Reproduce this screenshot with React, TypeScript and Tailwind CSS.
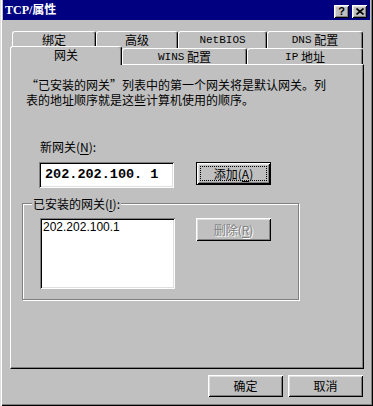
import React from "react";

const raised =
  "bg-[#c0c0c0] shadow-[inset_1px_1px_#ffffff,inset_-1px_-1px_#000000,inset_2px_2px_#dfdfdf,inset_-2px_-2px_#808080]";
const sunken =
  "shadow-[inset_1px_1px_#808080,inset_-1px_-1px_#ffffff,inset_2px_2px_#000000,inset_-2px_-2px_#dfdfdf]";

function U({ children }: { children: React.ReactNode }) {
  return <span className="underline underline-offset-[2px] decoration-1">{children}</span>;
}

function Latin({ children }: { children: React.ReactNode }) {
  return <span className="font-['Liberation_Mono',monospace] text-[11px]">{children}</span>;
}

function Tab({ className, children }: { className: string; children: React.ReactNode }) {
  return (
    <div
      className={`flex items-center justify-center border-l border-t border-r border-l-white border-t-white border-r-black rounded-t-[3px] shadow-[inset_-1px_0_#808080] bg-[#c0c0c0] ${className}`}
    >
      {children}
    </div>
  );
}

function Button({ className = "", children }: { className?: string; children: React.ReactNode }) {
  return (
    <div className={`w-[75px] flex items-center justify-center ${raised} ${className}`}>{children}</div>
  );
}

export default function App() {
  return (
    <div className="w-[373px] h-[406px] bg-[#c0c0c0] px-[3px] flex flex-col text-black font-['Noto_Sans_CJK_SC',sans-serif] text-[12px] leading-[14px] shadow-[inset_1px_0_#dfdfdf,inset_2px_0_#ffffff,inset_-1px_-1px_#000000,inset_-2px_-2px_#808080]">
      {/* Title bar */}
      <div className="h-[20px] bg-[#000080] flex items-center pl-[2px] pr-[3px]">
        <span className="text-white font-bold text-[12px] leading-[14px] font-['Liberation_Serif','Noto_Sans_CJK_SC',serif]">
          TCP/属性
        </span>
        <div className="ml-auto flex gap-[3px] mt-[3px]">
          <div className={`w-[15px] h-[13px] flex items-center justify-center ${raised}`}>
            <span className="font-['Liberation_Sans',sans-serif] font-bold text-[11px] leading-[11px]">?</span>
          </div>
          <div className={`w-[15px] h-[13px] flex items-center justify-center ${raised}`}>
            <svg width="8" height="7" viewBox="0 0 8 7">
              <path d="M0.5 0.5 L7.5 6.5 M7.5 0.5 L0.5 6.5" stroke="black" strokeWidth="1.6" />
            </svg>
          </div>
        </div>
      </div>

      {/* Tabs + panel */}
      <div className="ml-[7px] w-[354px] mt-[11px] flex flex-col">
        <div className="flex h-[17px] pl-[2px]">
          <Tab className="w-[84px] h-[17px]">绑定</Tab>
          <Tab className="w-[82px] h-[17px]">高级</Tab>
          <Tab className="w-[89px] h-[17px]">
            <Latin>NetBIOS</Latin>
          </Tab>
          <Tab className="w-[96px] h-[17px]">
            <Latin>DNS</Latin>&nbsp;配置
          </Tab>
        </div>
        <div className="flex h-[16px] items-start">
          <Tab className="w-[112px] h-[19px] -mt-[2px] relative z-10 pb-[3px]">网关</Tab>
          <Tab className="w-[125px] h-[16px]">
            <Latin>WINS</Latin>&nbsp;配置
          </Tab>
          <Tab className="w-[116px] h-[16px]">
            <Latin>IP</Latin>&nbsp;地址
          </Tab>
        </div>

        {/* Panel */}
        <div className="h-[305px] border-l border-t border-l-white border-t-white border-r border-b border-r-black border-b-black shadow-[inset_-1px_-1px_#808080] pl-[15px] pt-[12px] flex flex-col">
          <p className="whitespace-nowrap leading-[15px]">
            “已安装的网关”列表中的第一个网关将是默认网关。列
            <br />
            表的地址顺序就是这些计算机使用的顺序。
          </p>

          <div className="mt-[33px] ml-[14px]">
            新网关(<U>N</U>):
          </div>

          <div className="mt-[8px] ml-[13px] flex items-start gap-[22px]">
            <div className={`w-[135px] h-[26px] bg-white ${sunken} flex items-center pl-[6px]`}>
              <span className="font-['Liberation_Mono',monospace] font-bold text-[13.5px] leading-[16px]">
                202.202.100. 1
              </span>
            </div>
            <div className="w-[75px] h-[23px] border border-black">
              <div className={`w-full h-full p-[3px] flex ${raised}`}>
                <div className="flex-1 border border-dotted border-black flex items-center justify-center">
                  添加(<U>A</U>)
                </div>
              </div>
            </div>
          </div>

          {/* Group box */}
          <div className="relative mt-[15px] -ml-[4px] w-[277px] h-[97px] border border-[#808080] shadow-[inset_1px_1px_#ffffff,1px_1px_0_#ffffff] flex items-start pt-[14px] pl-[17px] gap-[21px]">
            <div className="absolute left-[9px] -top-[7px] bg-[#c0c0c0] px-[1px]">
              已安装的网关(<U>I</U>):
            </div>
            <div className={`w-[135px] h-[71px] bg-white ${sunken} pl-[3px] pt-[2px]`}>
              <div className="font-['Liberation_Sans',sans-serif] text-[12px] leading-[14px]">202.202.100.1</div>
            </div>
            <Button className="h-[23px]">
              <span className="text-[#808080] [text-shadow:1px_1px_0_#ffffff]">
                删除(<U>R</U>)
              </span>
            </Button>
          </div>
        </div>
      </div>

      {/* Bottom buttons */}
      <div className="mt-[6px] flex justify-end gap-[5px] pr-[7px]">
        <Button className="h-[22px]">确定</Button>
        <Button className="h-[22px]">取消</Button>
      </div>
    </div>
  );
}
